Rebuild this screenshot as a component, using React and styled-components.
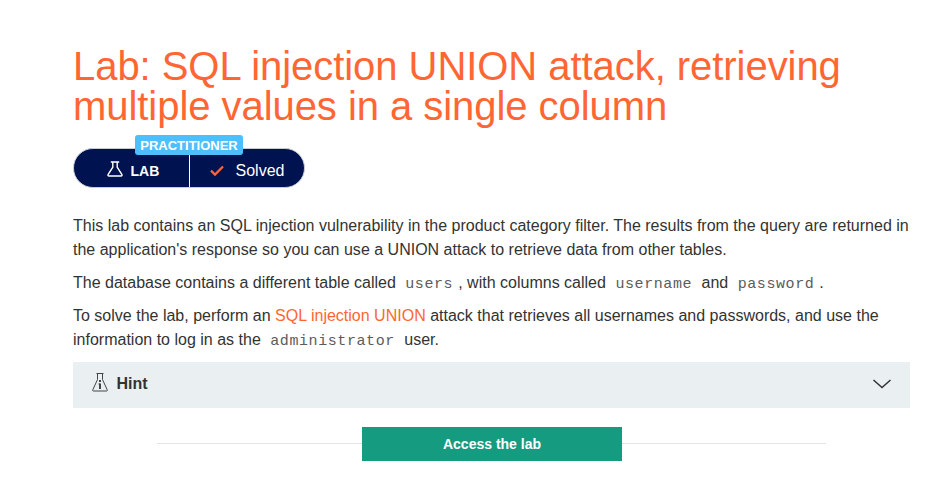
import React from "react";
import styled, { createGlobalStyle } from "styled-components";

const GlobalStyle = createGlobalStyle`
  body {
    margin: 0;
    background: #fff;
    color: #333332;
    font: 16px/24px "Liberation Sans", Arial, sans-serif;
  }
`;

const Page = styled.main`
  width: 837px;
  padding: 46px 0 0 73px;
`;

const Title = styled.h1`
  margin: 0;
  color: #ff6633;
  font-size: 40px;
  font-weight: 400;
  line-height: 40px;
  letter-spacing: -0.05px;
`;

const Status = styled.div`
  position: relative;
  display: flex;
  box-sizing: border-box;
  width: 232px;
  height: 40px;
  margin: 22px 0 26px;
  border: 1px solid #c9ccd4;
  border-radius: 20px;
  background: #00124f;
  color: #fff;
`;

const StatusPart = styled.div`
  display: flex;
  align-items: center;
  box-sizing: border-box;
  width: ${(p) => p.$width}px;
  padding: ${(p) => p.$padding};
  border-left: ${(p) => (p.$divided ? "1px solid #fff" : "0")};
  line-height: 20px;
`;

const LabFlask = styled.svg`
  margin-top: -4px;
`;

const LabLabel = styled.span`
  margin-left: 7.5px;
  font-size: 14px;
  font-weight: 700;
`;

const SolvedLabel = styled.span`
  margin-left: 11.5px;
`;

const Level = styled.span`
  position: absolute;
  top: -14px;
  left: 61px;
  width: 108px;
  height: 20px;
  border-radius: 3px;
  background: #4dbfff;
  font-size: 13px;
  font-weight: 700;
  line-height: 21px;
  text-align: center;
`;

const Paragraph = styled.p`
  margin: 0 0 9px;
  letter-spacing: 0.005px;
`;

const Code = styled.code`
  margin: 0 5px;
  color: #5c5c5b;
  font: 15px/20px "Liberation Mono", monospace;
  letter-spacing: 0.58px;
`;

const Link = styled.a`
  color: #ff6633;
  text-decoration: none;
`;

const Hint = styled.div`
  display: flex;
  align-items: center;
  box-sizing: border-box;
  height: 46px;
  margin-top: 10px;
  padding: 0 19px;
  background: #eaeff2;
`;

const HintLabel = styled.strong`
  flex: 1;
  margin: -2px 0 0 8.5px;
`;

const HintFlask = styled.svg`
  margin-top: -6px;
`;

const Chevron = styled.svg`
  margin-top: -2px;
`;

const Access = styled.div`
  display: flex;
  align-items: center;
  width: 669px;
  margin: 19px auto 0;
`;

const Rule = styled.span`
  flex: ${(p) => p.$grow};
  height: 1px;
  margin-top: -1px;
  background: #e3e3e3;
`;

const AccessButton = styled.button`
  width: 260px;
  height: 34px;
  padding: 0;
  border: 0;
  background: #159b80;
  color: #fff;
  font: 700 14px/34px "Liberation Sans", Arial, sans-serif;
`;

export default function App() {
  return (
    <>
      <GlobalStyle />
      <Page>
        <Title>Lab: SQL injection UNION attack, retrieving multiple values in a single column</Title>
        <Status>
          <StatusPart $width={115} $padding="5px 0 0 33px">
            <LabFlask width="16" height="16" viewBox="0 0 16 16" fill="none" stroke="#fff" strokeWidth="1.4">
              <path d="M3.8 1h8.4M5.8 1v5.2L1.2 13.4q-.8 1.6.9 1.6h11.8q1.7 0 .9-1.6L10.2 6.2V1" />
            </LabFlask>
            <LabLabel>LAB</LabLabel>
          </StatusPart>
          <StatusPart $width={115} $padding="5px 0 0 20px" $divided>
            <svg width="14" height="12" viewBox="0 0 14 12" fill="none" stroke="#ff6633" strokeWidth="2.2">
              <path d="M1 5.6 5 9.6 13 1.4" />
            </svg>
            <SolvedLabel>Solved</SolvedLabel>
          </StatusPart>
          <Level>PRACTITIONER</Level>
        </Status>
        <Paragraph>
          This lab contains an SQL injection vulnerability in the product category filter. The results from the
          query are returned in the application's response so you can use a UNION attack to retrieve data from
          other tables.
        </Paragraph>
        <Paragraph>
          The database contains a different table called <Code>users</Code>, with columns called{" "}
          <Code>username</Code> and <Code>password</Code>.
        </Paragraph>
        <Paragraph>
          To solve the lab, perform an <Link>SQL injection UNION</Link> attack that retrieves all usernames and
          passwords, and use the information to log in as the <Code>administrator</Code> user.
        </Paragraph>
        <Hint>
          <HintFlask width="16" height="19" viewBox="0 0 16 19" fill="none" stroke="#444" strokeWidth="1">
            <path d="M4.5 .5h7M5.5 .5v6L.8 16.8q-.5 1.2.7 1.2h13q1.2 0 .7-1.2L10.5 6.5v-6" />
            <path d="M8 7v2M8 10.5V16" strokeWidth="2" />
            <path d="M6.5 11H8" />
          </HintFlask>
          <HintLabel>Hint</HintLabel>
          <Chevron width="18" height="10" viewBox="0 0 18 10" fill="none" stroke="#333332" strokeWidth="1.5">
            <path d="M.5 1 9 8.5 17.5 1" />
          </Chevron>
        </Hint>
        <Access>
          <Rule $grow={205} />
          <AccessButton>Access the lab</AccessButton>
          <Rule $grow={204} />
        </Access>
      </Page>
    </>
  );
}
